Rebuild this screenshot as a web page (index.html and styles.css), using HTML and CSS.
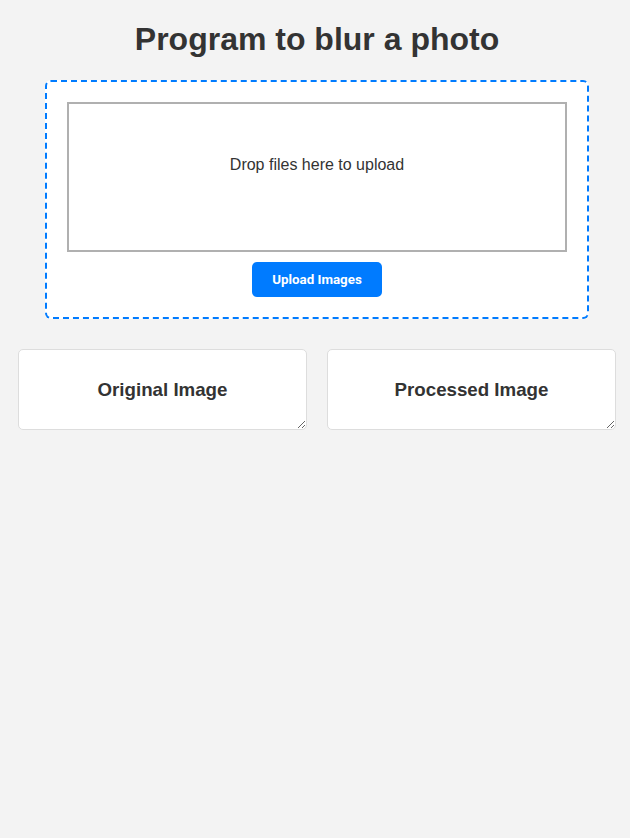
FILE: index.html
```html
<!DOCTYPE html>
<html lang="en">
<head>
<meta charset="utf-8">
<title>Program to blur a photo</title>
<link rel="stylesheet" href="styles.css">
</head>
<body>
<main class="page">
  <h1 class="title">Program to blur a photo</h1>
  <section class="upload">
    <div class="dropzone">Drop files here to upload</div>
    <button class="upload-btn" type="button">Upload Images</button>
  </section>
  <section class="panels">
    <div class="panel"><h3 class="panel-title">Original Image</h3></div>
    <div class="panel"><h3 class="panel-title">Processed Image</h3></div>
  </section>
</main>
</body>
</html>
```
FILE: styles.css
```css
html, body {
  margin: 0;
  padding: 0;
  background: #f3f3f3;
}
body {
  font-family: "Liberation Sans", Arial, sans-serif;
  color: #333;
}
.page {
  margin-left: 4px;
  display: flex;
  flex-direction: column;
}
.title {
  margin: 21px 0 22px;
  font-size: 32px;
  line-height: 37px;
  font-weight: bold;
  text-align: center;
  color: #333;
}
.upload {
  box-sizing: border-box;
  width: 544px;
  margin: 0 auto 30px;
  padding: 20px;
  border: 2px dashed #007bff;
  border-radius: 6px;
  background: #fff;
  display: flex;
  flex-direction: column;
  align-items: center;
}
.dropzone {
  box-sizing: border-box;
  width: 100%;
  height: 150px;
  padding-top: 52px;
  border: 2px solid #b0b0b0;
  text-align: center;
  font-size: 16px;
  line-height: 18px;
  color: #333;
}
.upload-btn {
  margin-top: 10px;
  padding: 10px 20px;
  border: none;
  border-radius: 5px;
  background: #007bff;
  color: #fff;
  font-family: Roboto, "Liberation Sans", sans-serif;
  font-size: 13.333px;
  line-height: 15px;
  font-weight: bold;
  cursor: pointer;
}
.panels {
  display: flex;
  gap: 20px;
  padding: 0 14px;
}
.panel {
  flex: 1;
  box-sizing: border-box;
  height: 81px;
  padding: 10px;
  border: 1px solid #ddd;
  border-radius: 5px;
  background: #fff;
  overflow: auto;
  resize: both;
  text-align: center;
}
.panel-title {
  margin: 18.72px 0;
  font-size: 18.72px;
  line-height: 21.5px;
  font-weight: bold;
  color: #333;
}
```
